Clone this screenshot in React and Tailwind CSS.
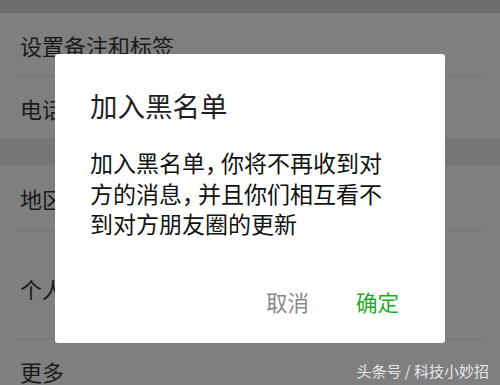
export default function App() {
  const font = { fontFamily: '"Noto Sans CJK SC", "Noto Sans", sans-serif' };
  const Comma = () => (
    <span className="inline-block w-[16px] overflow-visible">，</span>
  );
  return (
    <div
      className="relative w-[500px] h-[385px] overflow-hidden bg-[#7f7f7f]"
      style={font}
    >
      <div className="h-[13px] bg-[#6c6c6c]" />
      <div className="h-[63px] flex items-center pl-[20px] text-[22px] leading-[22px] text-[#1a1a1a]">
        设置备注和标签
      </div>
      <div className="h-px ml-[16px] mr-[17px] bg-[#747474]" />
      <div className="h-[61px] flex items-center pl-[20px] text-[22px] leading-[22px] text-[#1a1a1a]">
        电话号码
      </div>
      <div className="h-[27px] bg-[#767676]" />
      <div className="h-[65px] flex items-center pl-[20px] text-[22px] leading-[22px] text-[#1a1a1a]">
        地区
      </div>
      <div className="h-px ml-[16px] mr-[17px] bg-[#747474]" />
      <div className="h-[107px] flex items-center pl-[20px] pt-[6px] text-[22px] leading-[22px] text-[#1a1a1a]">
        个人相册
      </div>
      <div className="h-px ml-[16px] mr-[17px] bg-[#747474]" />
      <div className="h-[64px] flex items-center pl-[20px] text-[22px] leading-[22px] text-[#1a1a1a]">
        更多
      </div>

      <div className="absolute left-[55px] top-[54px] w-[390px] h-[289px] bg-white rounded-[3px] pl-[35px] pt-[37px]">
        <div className="text-[27.5px] leading-[28px] h-[28px] text-[#1f1f1f]">
          加入黑名单
        </div>
        <div className="mt-[28px] text-[23px] leading-[30.5px] text-[#111111] whitespace-nowrap">
          <div>
            加入黑名单<Comma />你将不再收到对
          </div>
          <div>
            方的消息<Comma />并且你们相互看不
          </div>
          <div>到对方朋友圈的更新</div>
        </div>
        <div className="absolute right-[46px] top-[237px] flex gap-[47px] text-[21.5px] leading-[22px]">
          <span className="text-[#8a8a8a]">取消</span>
          <span className="text-[#1aad19]">确定</span>
        </div>
      </div>

      <div className="absolute right-[11px] top-[362px] text-[15px] leading-[18px] text-[#e6e6e6] whitespace-nowrap">
        头条号 / 科技小妙招
      </div>
    </div>
  );
}
